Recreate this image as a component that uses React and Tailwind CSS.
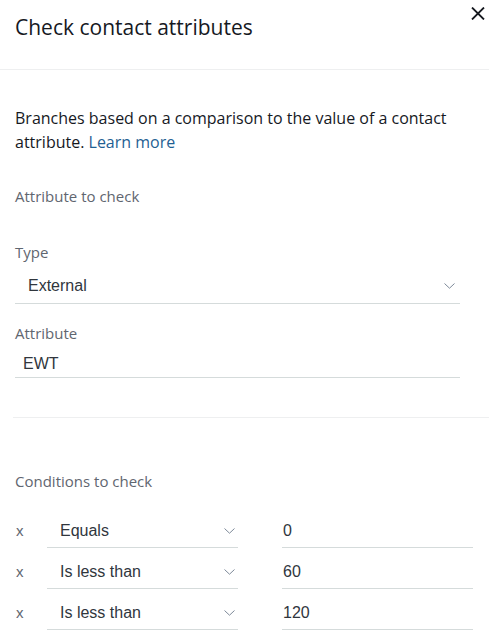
import React from "react";

const sans = { fontFamily: "'Open Sans', 'Noto Sans', sans-serif" };

const Chevron = () => (
  <svg width="11" height="6" viewBox="0 0 11 6" fill="none" className="shrink-0">
    <path d="M0.5 0.5 L5.5 5.2 L10.5 0.5" stroke="#7d8998" strokeWidth="1" />
  </svg>
);

const Select = ({ value, className }) => (
  <div className={`flex items-center justify-between border-b border-[#d5dbdb] ${className}`}>
    <span className="text-[16px] leading-6 text-[#30363d] font-['Liberation_Sans',Arial,sans-serif]">
      {value}
    </span>
    <Chevron />
  </div>
);

const conditions = [
  { op: "Equals", value: "0" },
  { op: "Is less than", value: "60" },
  { op: "Is less than", value: "120" },
];

export default function App() {
  return (
    <div className="relative w-[489px] h-[640px] bg-white overflow-hidden text-[#16191f]" style={sans}>
      {/* header */}
      <div className="h-[70px] border-b border-[#eeeff0] pl-[15px] pt-[13px]">
        <h1 className="text-[21px] leading-7 font-normal">Check contact attributes</h1>
      </div>
      <button className="absolute top-[6px] right-[4px] w-[14px] h-[14px] flex items-center justify-center">
        <svg width="14" height="13" viewBox="0 0 14 13" fill="none">
          <path d="M1 0.5 L13 12.5 M13 0.5 L1 12.5" stroke="#16191f" strokeWidth="1.8" />
        </svg>
      </button>

      <div className="pl-[15px] pt-[36px]">
        <p className="text-[16px] leading-6 w-[445px]">
          Branches based on a comparison to the value of a contact attribute.{" "}
          <span className="text-[#1f5f93]">Learn more</span>
        </p>

        <div className="mt-[30px] text-[15px] leading-6 text-[#5f6670]">Attribute to check</div>

        <div className="mt-[32px] text-[15px] leading-6 text-[#5f6670]">Type</div>
        <Select value="External" className="mt-[10px] w-[445px] pl-[13px] pr-[5px] pb-[5px]" />

        <div className="mt-[17px] text-[15px] leading-6 text-[#5f6670]">Attribute</div>
        <div className="mt-[7px] w-[445px] pl-[8px] pb-[1px] border-b border-[#d5dbdb] text-[16px] leading-6 text-[#30363d] font-['Liberation_Sans',Arial,sans-serif]">
          EWT
        </div>
      </div>

      <div className="mt-[39px] ml-[13px] border-t border-[#eeeff0]" />

      <div className="pl-[15px] pt-[51px]">
        <div className="text-[15px] leading-6 text-[#5f6670]">Conditions to check</div>
        <div className="mt-[26px] flex flex-col gap-[12px]">
          {conditions.map((c, i) => (
            <div key={i} className="flex items-start">
              <span className="w-[32px] pl-[1px] text-[15px] leading-6 text-[#5f6670] font-['Liberation_Sans',Arial,sans-serif]">
                x
              </span>
              <Select value={c.op} className="w-[191px] pl-[13px] pr-[3px] pb-[4px]" />
              <div className="ml-[44px] w-[191px] pl-[1px] pb-[4px] border-b border-[#d5dbdb] text-[16px] leading-6 text-[#30363d] font-['Liberation_Sans',Arial,sans-serif]">
                {c.value}
              </div>
            </div>
          ))}
        </div>
      </div>
    </div>
  );
}
